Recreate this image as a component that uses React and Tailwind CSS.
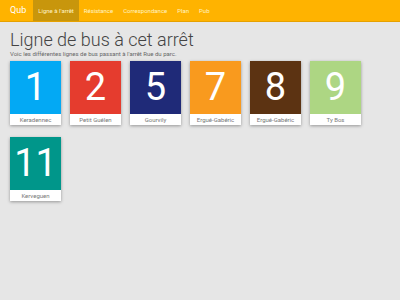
import React from 'react';

const lines = [
  { num: '1', name: 'Keradennec', color: 'bg-[#03a9f4]' },
  { num: '2', name: 'Petit Guélen', color: 'bg-[#e53c2e]' },
  { num: '5', name: 'Gourvily', color: 'bg-[#1f2a78]' },
  { num: '7', name: 'Ergué-Gabéric', color: 'bg-[#f99a1e]' },
  { num: '8', name: 'Ergué-Gabéric', color: 'bg-[#5c3312]' },
  { num: '9', name: 'Ty Bos', color: 'bg-[#add683]' },
  { num: '11', name: 'Kerveguen', color: 'bg-[#00968a]' },
];

const navItems = ['Ligne à l\'arrêt', 'Résistance', 'Correspondance', 'Plan', 'Pub'];

const LineCard = ({ line }) => (
  <div className="w-[51px] bg-white shadow-[0_1px_3px_rgba(0,0,0,0.35)]">
    <div className={`${line.color} h-[53px] flex items-center justify-center text-white text-[38px] font-normal leading-none pb-[2px]`}>
      {line.num}
    </div>
    <div className="h-[11px] flex items-center justify-center text-[6px] text-[#777] whitespace-nowrap">
      {line.name}
    </div>
  </div>
);

export default function App() {
  return (
    <div className="w-[400px] h-[300px] bg-[#e6e6e6] font-['Roboto',sans-serif] overflow-hidden">
      <nav className="h-[22px] bg-[#ffb300] border-b border-[#e6a100] flex items-stretch pl-[10px]">
        <span className="text-white text-[9px] flex items-center mr-[7px]">Qub</span>
        {navItems.map((item, i) => (
          <span
            key={item}
            className={`text-[6px] text-[#fff3c4] flex items-center px-[5px] ${i === 0 ? 'bg-[#c8960c]' : ''}`}
          >
            {item}
          </span>
        ))}
      </nav>
      <div className="px-[10px]">
        <h1 className="text-[18px] font-light text-[#444] mt-[8px] leading-[20px]">Ligne de bus à cet arrêt</h1>
        <p className="text-[6px] text-[#666] leading-[8px]">Voic les différentes lignes de bus passant à l'arrêt Rue du parc.</p>
        <div className="flex flex-wrap gap-x-[9px] gap-y-[12px] mt-[3px] w-[360px]">
          {lines.map((line) => (
            <LineCard key={line.num} line={line} />
          ))}
        </div>
      </div>
    </div>
  );
}
